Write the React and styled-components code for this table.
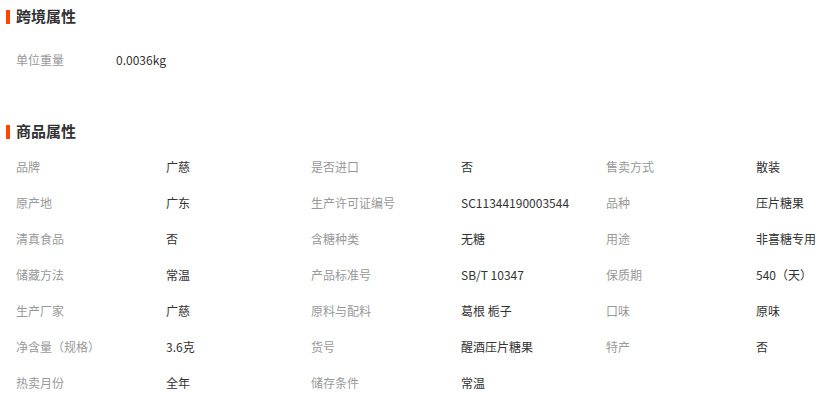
import React from "react";
import styled, { createGlobalStyle } from "styled-components";

const Global = createGlobalStyle`
  html, body { margin: 0; padding: 0; background: #fff; }
  body { font-family: "Noto Sans CJK SC", "Noto Sans", sans-serif; font-size: 12px; color: #333; }
`;

const Page = styled.div`
  width: 835px;
  overflow: hidden;
`;

const Section = styled.section`
  margin-top: ${(p) => p.$top || 0}px;
`;

const Title = styled.h3`
  margin: 0;
  height: 33px;
  box-sizing: border-box;
  padding-bottom: 2px;
  display: flex;
  align-items: center;
  gap: 6px;
  padding-left: 6px;
  font-size: 15px;
  font-weight: bold;
  color: #333;
  &::before {
    content: "";
    display: block;
    width: 4px;
    height: 14px;
    margin-top: 2px;
    background: #ff4400;
  }
`;

const Grid = styled.div`
  display: grid;
  grid-template-columns: ${(p) => p.$cols};
  padding-left: 16px;
  margin-top: ${(p) => p.$top || 0}px;
`;

const Cell = styled.div`
  display: flex;
  height: 36px;
  box-sizing: border-box;
  padding-bottom: 2px;
  align-items: center;
  white-space: nowrap;
`;

const Label = styled.span`
  width: ${(p) => p.$w}px;
  flex: none;
  color: #999;
`;

const Value = styled.span`
  color: #333;
`;

const product = [
  ["品牌", "广慈"], ["是否进口", "否"], ["售卖方式", "散装"],
  ["原产地", "广东"], ["生产许可证编号", "SC11344190003544"], ["品种", "压片糖果"],
  ["清真食品", "否"], ["含糖种类", "无糖"], ["用途", "非喜糖专用"],
  ["储藏方法", "常温"], ["产品标准号", "SB/T 10347"], ["保质期", "540（天）"],
  ["生产厂家", "广慈"], ["原料与配料", "葛根 栀子"], ["口味", "原味"],
  ["净含量（规格）", "3.6克"], ["货号", "醒酒压片糖果"], ["特产", "否"],
  ["热卖月份", "全年"], ["储存条件", "常温"],
];

export default function App() {
  return (
    <Page>
      <Global />
      <Section>
        <Title>跨境属性</Title>
        <Grid $cols="1fr" $top={9}>
          <Cell>
            <Label $w={100}>单位重量</Label>
            <Value>0.0036kg</Value>
          </Cell>
        </Grid>
      </Section>
      <Section $top={37}>
        <Title>商品属性</Title>
        <Grid $cols="295px 295px 1fr" $top={1}>
          {product.map(([k, v]) => (
            <Cell key={k}>
              <Label $w={150}>{k}</Label>
              <Value>{v}</Value>
            </Cell>
          ))}
        </Grid>
      </Section>
    </Page>
  );
}
